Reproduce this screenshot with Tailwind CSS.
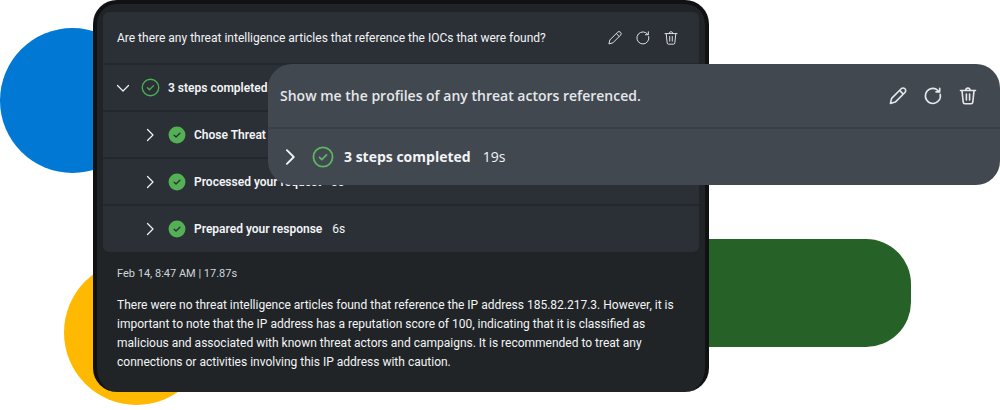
<!DOCTYPE html>
<html lang="en">
<head>
  <meta charset="UTF-8" />
  <meta name="viewport" content="width=device-width, initial-scale=1.0" />
  <title>Threat Intelligence Prompts</title>
  <script src="https://cdn.jsdelivr.net/npm/@tailwindcss/browser@4"></script>
</head>
<body class="bg-white font-['Open_Sans',sans-serif] text-xs text-gray-100">

  <!-- Shared icons -->
  <svg class="hidden">
    <symbol id="pencil" viewBox="0 0 20 20" fill="none" stroke="currentColor" stroke-linejoin="round">
      <path d="M3.6 12.4 13.2 2.8a2.5 2.5 0 0 1 3.7 3.7L7.3 16.1 2.4 17.4Z" />
      <path d="m11.6 4.4 3.7 3.7" />
    </symbol>
    <symbol id="refresh" viewBox="0 0 20 20" fill="none" stroke="currentColor" stroke-linecap="round" stroke-linejoin="round">
      <path d="M17.2 8.2A7.5 7.5 0 1 1 13.4 3.3L16.3 5.6" />
      <path d="M16.7 2.2v3.7H13" />
    </symbol>
    <symbol id="trash" viewBox="0 0 20 20" fill="none" stroke="currentColor" stroke-linecap="round" stroke-linejoin="round">
      <path d="M2.5 4.5h15M7.8 4.3a2.2 2.2 0 0 1 4.4 0" />
      <path d="m4 4.7 1.2 11.4a1.8 1.8 0 0 0 1.8 1.6h6a1.8 1.8 0 0 0 1.8-1.6L16 4.7M8.4 8v6M11.6 8v6" />
    </symbol>
    <symbol id="chevron" viewBox="0 0 16 16" fill="none" stroke="currentColor" stroke-linecap="round" stroke-linejoin="round">
      <path d="m5.5 2.5 5.5 5.5-5.5 5.5" />
    </symbol>
    <symbol id="check-ring" viewBox="0 0 20 20" fill="none" stroke="currentColor" stroke-linecap="round" stroke-linejoin="round">
      <circle cx="10" cy="10" r="8.7" />
      <path d="m6.8 10.3 2.1 2 4.3-4.3" />
    </symbol>
    <symbol id="check-solid" viewBox="0 0 20 20">
      <circle cx="10" cy="10" r="9.4" fill="currentColor" />
      <path d="m6.8 10.3 2.1 2 4.3-4.3" fill="none" stroke="#2b3036" stroke-width="1.5" stroke-linecap="round" stroke-linejoin="round" />
    </symbol>
  </svg>

  <main class="relative overflow-hidden pb-4">

    <!-- Background shapes -->
    <div class="absolute top-7 left-0 size-[145px] rounded-full bg-[#0078d4]"></div>
    <div class="absolute top-[260px] left-16 size-[145px] rounded-full bg-[#ffb900]"></div>
    <div class="absolute top-[239px] left-[65%] right-[8.9%] h-[108px] rounded-r-[45px] bg-[#266127]"></div>

    <!-- Session card -->
    <section class="relative ml-[9.3%] w-[61.6%] rounded-3xl border-x-4 border-t-4 border-[#0f1113] bg-[#202426] px-[6px] pt-2 pb-5 font-[Roboto,sans-serif]">
      <div class="divide-y-2 divide-[#24282c] rounded-md bg-[#2b3037]">
        <div class="flex h-[53px] items-center justify-between pr-5 pl-[14px]">
          <h2 class="whitespace-nowrap">Are there any threat intelligence articles that reference the IOCs that were found?</h2>
          <div class="flex gap-3 text-gray-200">
            <button aria-label="Edit prompt"><svg class="size-4"><use href="#pencil" stroke-width="1.2" /></svg></button>
            <button aria-label="Run again"><svg class="size-4"><use href="#refresh" stroke-width="1.2" /></svg></button>
            <button aria-label="Delete prompt"><svg class="size-4"><use href="#trash" stroke-width="1.2" /></svg></button>
          </div>
        </div>
        <button class="flex h-[47px] w-full items-center pl-3" aria-expanded="true">
          <svg class="size-4 rotate-90"><use href="#chevron" stroke-width="1.2" /></svg>
          <svg class="ml-[10px] size-[19px] text-[#4caf50]"><use href="#check-ring" stroke-width="1.4" /></svg>
          <span class="ml-2 font-semibold">3 steps completed</span>
        </button>
        <button class="flex h-[47px] w-full items-center pl-[39px]" aria-expanded="false">
          <svg class="size-4"><use href="#chevron" stroke-width="1.2" /></svg>
          <svg class="ml-[10px] size-[18px] text-[#54b054]"><use href="#check-solid" /></svg>
          <span class="ml-2 font-semibold">Chose Threat</span>
        </button>
        <button class="flex h-[47px] w-full items-center pl-[39px]" aria-expanded="false">
          <svg class="size-4"><use href="#chevron" stroke-width="1.2" /></svg>
          <svg class="ml-[10px] size-[18px] text-[#54b054]"><use href="#check-solid" /></svg>
          <span class="ml-2 font-semibold">Processed your request</span>
          <span class="ml-[10px]">3s</span>
        </button>
        <button class="flex h-[46px] w-full items-center pl-[39px]" aria-expanded="false">
          <svg class="size-4"><use href="#chevron" stroke-width="1.2" /></svg>
          <svg class="ml-[10px] size-[18px] text-[#54b054]"><use href="#check-solid" /></svg>
          <span class="ml-2 font-semibold">Prepared your response</span>
          <span class="ml-[10px]">6s</span>
        </button>
      </div>

      <div class="px-[14px] pt-[14px]">
        <p class="text-[11px] leading-4 text-gray-300">Feb 14, 8:47 AM | 17.87s</p>
        <p class="mt-[14px] leading-[19px] whitespace-nowrap">
          There were no threat intelligence articles found that reference the IP address 185.82.217.3. However, it is<br />
          important to note that the IP address has a reputation score of 100, indicating that it is classified as<br />
          malicious and associated with known threat actors and campaigns. It is recommended to treat any<br />
          connections or activities involving this IP address with caution.
        </p>
      </div>
    </section>

    <!-- Next prompt, laid over the session card -->
    <section class="absolute top-16 right-0 left-[26.8%] rounded-3xl bg-[#41484f] text-sm">
      <div class="flex h-[65px] items-center justify-between border-b-2 border-[#393f46] pr-[22px] pl-3">
        <h2 class="font-semibold text-gray-200">Show me the profiles of any threat actors referenced.</h2>
        <div class="flex gap-[15px] text-gray-200">
          <button aria-label="Edit prompt"><svg class="size-5"><use href="#pencil" stroke-width="1.6" /></svg></button>
          <button aria-label="Run again"><svg class="size-5"><use href="#refresh" stroke-width="1.6" /></svg></button>
          <button aria-label="Delete prompt"><svg class="size-5"><use href="#trash" stroke-width="1.6" /></svg></button>
        </div>
      </div>
      <button class="flex h-14 w-full items-center pl-3" aria-expanded="false">
        <svg class="size-5"><use href="#chevron" stroke-width="1.5" /></svg>
        <svg class="ml-3 size-[22px] text-[#5fb563]"><use href="#check-ring" stroke-width="1.6" /></svg>
        <span class="ml-[10px] font-bold">3 steps completed</span>
        <span class="ml-3">19s</span>
      </button>
    </section>
  </main>

</body>
</html>
